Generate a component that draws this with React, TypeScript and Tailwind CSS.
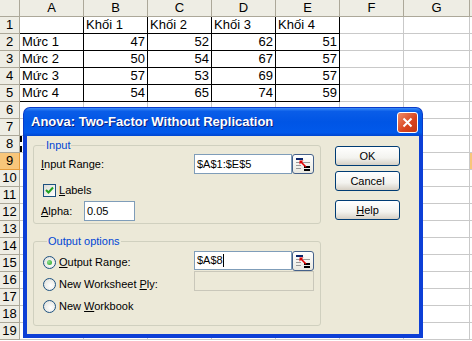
import type { ReactNode } from "react";

const cols = ["A", "B", "C", "D", "E", "F", "G", ""];

const data: (string | number)[][] = [
  ["", "Khối 1", "Khối 2", "Khối 3", "Khối 4"],
  ["Mức 1", 47, 52, 62, 51],
  ["Mức 2", 50, 54, 67, 57],
  ["Mức 3", 57, 53, 69, 57],
  ["Mức 4", 54, 65, 74, 59],
];

function Sheet() {
  const rows = Array.from({ length: 19 }, (_, i) => i + 1);
  return (
    <div className="grid grid-cols-[20px_64px_64px_64px_64px_64px_64px_66px_1fr] auto-rows-[17px] text-[13px] leading-[16px] text-black">
      {/* header row */}
      <div className="bg-[#EEEDE4] border-r border-b border-[#ACA899]" />
      {cols.map((c, i) => (
        <div
          key={i}
          className="bg-[#EEEDE4] border-r border-b border-[#ACA899] flex items-center justify-center"
        >
          {c}
        </div>
      ))}
      {rows.map((r) => {
        const row = data[r - 1];
        return [
          <div
            key={"h" + r}
            className={
              r === 9
                ? "bg-[#F8C67A] border-r border-b border-[#E59B3A] flex items-center justify-center"
                : "bg-[#EEEDE4] border-r border-b border-[#ACA899] flex items-center justify-center"
            }
          >
            {r}
          </div>,
          ...cols.map((_, ci) => {
            const inTable = row && ci < 5;
            const v = row ? row[ci] : undefined;
            const num = typeof v === "number";
            return (
              <div
                key={r + "-" + ci}
                className={
                  (inTable ? "border-black " : "border-[#C9C9C9] ") +
                  (r === 9 && ci === 7 ? "bg-[#F8C67A] " : "bg-white ") +
                  "border-r border-b flex items-center overflow-hidden whitespace-nowrap " +
                  (num ? "justify-end pr-[2px]" : "pl-[2px]")
                }
              >
                {r === 8 && ci === 0 ? (
                  <div className="h-full -ml-[2px] w-[2px] border-l-2 border-dashed border-black" />
                ) : (
                  v
                )}
              </div>
            );
          }),
        ];
      })}
    </div>
  );
}

function U({ children }: { children: ReactNode }) {
  return <span className="underline underline-offset-[1px]">{children}</span>;
}

function RangeButton() {
  return (
    <div className="w-[22px] h-[20px] rounded-[3px] border border-[#45618A] bg-[linear-gradient(#FFFFFF,#E9E8E0)] flex items-center justify-center">
      <svg width="16" height="14" viewBox="0 0 16 14">
        <rect x="1" y="1" width="7" height="2" fill="#0A246A" />
        <path d="M1 5.5h14M1 8.5h5M1 11.5h5" stroke="#9A9A9A" strokeWidth="1" />
        <rect x="9" y="9" width="6" height="2" fill="#000" />
        <rect x="9" y="12" width="6" height="2" fill="#000" />
        <path d="M11 10L6 5" stroke="#E00000" strokeWidth="1.6" />
        <path d="M4.5 3.5h4l-4 4z" fill="#E00000" />
      </svg>
    </div>
  );
}

function Field({ value, caret, w }: { value: string; caret?: boolean; w: string }) {
  return (
    <div className={`${w} h-full bg-white border border-[#7F9DB9] flex items-center pl-[2px] text-[11px]`}>
      <span>{value}</span>
      {caret && <span className="w-px h-[13px] bg-black" />}
    </div>
  );
}

function Radio({ on }: { on?: boolean }) {
  return (
    <div className="w-[13px] h-[13px] rounded-full border border-[#1C5180] bg-[radial-gradient(circle_at_60%_60%,#FFFFFF,#DCDCD5)] flex items-center justify-center shrink-0">
      {on && <div className="w-[5px] h-[5px] rounded-full bg-[radial-gradient(circle_at_35%_35%,#8FE08F,#21A121)]" />}
    </div>
  );
}

function Checkbox() {
  return (
    <div className="w-[13px] h-[13px] border border-[#1C5180] bg-[linear-gradient(135deg,#DCDCD5,#FFFFFF)] flex items-center justify-center shrink-0">
      <svg width="9" height="9" viewBox="0 0 9 9">
        <path d="M1 4l2.5 2.5L8 1.5" stroke="#21A121" strokeWidth="2" fill="none" />
      </svg>
    </div>
  );
}

function XpButton({ children }: { children: ReactNode }) {
  return (
    <div className="w-[65px] h-[20px] rounded-[3px] border border-[#003C74] bg-[linear-gradient(#FFFFFF,#F3F3EF_60%,#D6D0C5)] flex items-center justify-center text-[11px]">
      {children}
    </div>
  );
}

function Dialog() {
  return (
    <div className="absolute left-[23px] top-[107px] w-[400px] h-[231px] flex flex-col text-black text-[11px] leading-[13px]">
      <div className="h-[29px] shrink-0 rounded-t-[7px] bg-[linear-gradient(#3D8EF8,#0A5DE8_12%,#0055E5_50%,#0159EB_88%,#0046CF)] border-x border-t border-[#0A3BC8] flex items-center justify-between pl-[7px] pr-[4px]">
        <span className="text-white font-bold text-[13px] pb-[1px] [text-shadow:1px_1px_#0A1F80]">
          Anova: Two-Factor Without Replication
        </span>
        <div className="w-[21px] h-[21px] mt-[1px] rounded-[3px] border border-white bg-[linear-gradient(135deg,#F08A68,#D8431D_60%,#C23A15)] flex items-center justify-center">
          <svg width="11" height="11" viewBox="0 0 11 11">
            <path d="M1.5 1.5l8 8M9.5 1.5l-8 8" stroke="#fff" strokeWidth="2" />
          </svg>
        </div>
      </div>
      <div className="flex-1 flex bg-[#ECE9D8] border-x-4 border-b-4 border-[#0D3FD6] pl-[6px] pt-[3px]">
        <div className="w-[288px] flex flex-col">
          <fieldset className="border border-[#D0D0BF] rounded-[3px] pl-[7px] pr-[6px] pb-[2px]">
            <legend className="ml-[4px] px-[1px] text-[#0046D5]">Input</legend>
            <div className="mt-[2px] h-[20px] flex items-center">
              <span className="w-[153px]">
                <U>I</U>nput Range:
              </span>
              <Field value="$A$1:$E$5" w="w-[98px]" />
              <RangeButton />
            </div>
            <div className="mt-[10px] h-[13px] flex items-center pl-[2px] gap-[3px]">
              <Checkbox />
              <span>
                <U>L</U>abels
              </span>
            </div>
            <div className="mt-[4px] h-[20px] flex items-center">
              <span className="w-[43px]">
                <U>A</U>lpha:
              </span>
              <Field value="0.05" w="w-[51px]" />
            </div>
          </fieldset>
          <fieldset className="mt-[11px] border border-[#D0D0BF] rounded-[3px] pl-[9px] pr-[6px] pb-[13px]">
            <legend className="ml-[4px] px-[1px] text-[#0046D5]">Output options</legend>
            <div className="mt-[3px] h-[19px] flex items-center">
              <div className="w-[151px] flex items-center gap-[3px] pt-[4px]">
                <Radio on />
                <span>
                  <U>O</U>utput Range:
                </span>
              </div>
              <Field value="$A$8" caret w="w-[98px]" />
              <RangeButton />
            </div>
            <div className="mt-[1px] h-[20px] flex items-center">
              <div className="w-[151px] flex items-center gap-[3px] pt-[6px]">
                <Radio />
                <span>
                  New Worksheet <U>P</U>ly:
                </span>
              </div>
              <div className="w-[120px] h-full border border-[#C9C7BA] bg-[#ECE9D8]" />
            </div>
            <div className="mt-[9px] h-[12px] flex items-center gap-[3px]">
              <Radio />
              <span>
                New <U>W</U>orkbook
              </span>
            </div>
          </fieldset>
        </div>
        <div className="ml-[14px] pt-[7px] flex flex-col">
          <XpButton>OK</XpButton>
          <div className="mt-[5px]">
            <XpButton>Cancel</XpButton>
          </div>
          <div className="mt-[9px]">
            <XpButton>
              <U>H</U>elp
            </XpButton>
          </div>
        </div>
      </div>
    </div>
  );
}

export default function App() {
  return (
    <div className="relative w-[472px] h-[341px] overflow-hidden bg-white font-['Liberation_Sans',Arial,sans-serif]">
      <Sheet />
      <Dialog />
    </div>
  );
}
